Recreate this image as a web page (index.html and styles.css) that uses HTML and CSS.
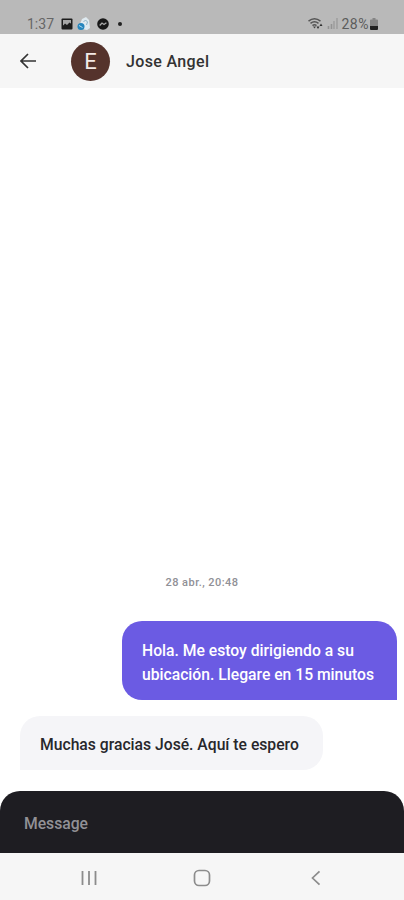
FILE: index.html
```html
<!DOCTYPE html>
<html lang="es">
 <head>
  <title>Jose Angel</title>
  <meta charset="UTF-8">
  <meta name="viewport" content="width=device-width, initial-scale=1">
  <link rel="stylesheet" href="styles.css">
 </head>
 <body>

 <div class="screen">
  <div class="status-bar">
   <span class="time">1:37</span>
   <svg class="picture" width="12" height="12" viewBox="0 0 12 12"><rect x="0.5" y="0.5" width="11" height="11" rx="1" fill="#1c1c1c"/><rect x="2" y="2" width="8" height="5.500" fill="#a6a6a6"/><path d="M1.500 8.500l2.500-3 2 1.500 2.500-2.500 2 1.500v4h-9z" fill="#1c1c1c"/></svg>
   <svg class="app" width="14" height="14" viewBox="0 0 14 14"><path d="M5 2l4-2 3 3 1 8-3 2-5-1-2-5z" fill="#dfeaf0"/><path d="M6.500 5l2-2 2 2-1 3" fill="none" stroke="#8db3c6"/><circle cx="4" cy="9.500" r="3.500" fill="#2585bd"/><path d="M2 8.500l3.500 2" stroke="#b7dcef"/></svg>
   <svg class="messenger" width="12" height="12" viewBox="0 0 12 12"><circle cx="6" cy="6" r="5.800" fill="#181818"/><path d="M2.700 7.500l2.300-2.500 2 1.500 2.400-1.800" fill="none" stroke="#aaa" stroke-width="1.300"/></svg>
   <span class="dot"></span>
   <svg class="wifi" width="16" height="13" viewBox="0 0 16 13"><path d="M.5 4.200q6-5 12 0M2.500 6.400q4-3.300 8 0M4.500 8.600q2-1.700 4 0" fill="none" stroke="#555" stroke-width="1.500"/><path d="M6.500 11.500l-1.500-2h3z" fill="#444"/><path d="M8.500 9.500h3l-1.500 2.500zM11.500 9h3L13 6.500z" fill="#303030"/></svg>
   <svg class="signal" width="11" height="11" viewBox="0 0 11 11"><path d="M1.500 11V8M4.500 11V6" stroke="#939393" stroke-width="1.600"/><path d="M7 11V3M10 11V0" stroke="#a0a0a0" stroke-width="1.600"/></svg>
   <span class="percent">28%</span>
   <svg class="battery" width="8" height="12" viewBox="0 0 8 12"><path d="M2.500 0h3v1.500H7q1 0 1 1V8H0V2.500q0-1 1-1h1.500z" fill="#858585"/><path d="M0 8h8v3q0 1-1 1H1q-1 0-1-1z" fill="#222"/></svg>
  </div>

  <div class="header">
   <svg class="back" width="16" height="16" viewBox="0 0 16 16"><path d="M8 1L1 8l7 7M1 8h15" fill="none" stroke="#333" stroke-width="1.700"/></svg>
   <div class="avatar">E</div>
   <div class="name">Jose Angel</div>
  </div>

  <div class="chat">
   <div class="date">28 abr., 20:48</div>
   <div class="message sent">Hola. Me estoy dirigiendo a su<br>ubicación. Llegare en 15 minutos</div>
   <div class="message received">Muchas gracias José. Aquí te espero</div>
  </div>

  <div class="composer">Message</div>

  <div class="nav">
   <svg width="18" height="18" viewBox="0 0 18 18"><path d="M2.500 2v14M9 2v14M15.500 2v14" stroke="#8c8c8c" stroke-width="1.800"/></svg>
   <svg width="18" height="18" viewBox="0 0 18 18"><rect x="1.500" y="1.500" width="15" height="15" rx="4.500" fill="none" stroke="#8c8c8c" stroke-width="1.700"/></svg>
   <svg width="18" height="18" viewBox="0 0 18 18"><path d="M13.500 2.300L6.500 9l7 6.700" fill="none" stroke="#8c8c8c" stroke-width="1.700"/></svg>
  </div>
 </div>

 </body>
</html>
```
FILE: styles.css
```css
* { box-sizing: border-box; }
body { margin: 0; background: #fff; font-family: Roboto, "Liberation Sans", sans-serif; }
svg { display: block; flex: none; }
.screen { display: flex; flex-direction: column; height: 900px; overflow: hidden; }

.status-bar { display: flex; align-items: center; height: 34px; padding: 13px 26px 0 27px; background: #b9b9b9; font-size: 14px; line-height: 20px; color: #666; }
.time { width: 28px; }
.picture { margin-left: 6px; }
.app { margin-left: 4px; }
.messenger { margin-left: 6px; }
.dot { width: 4px; height: 4px; margin-left: 9px; border-radius: 50%; background: #222; }
.wifi { margin-left: auto; }
.signal { margin-left: 3px; }
.percent { margin-left: 4px; letter-spacing: .5px; color: #5c5c5c; }
.battery { margin-left: 1px; }

.header { display: flex; align-items: center; height: 54px; padding: 0 20px; background: #f6f6f6; }
.avatar { width: 39px; height: 39px; margin-left: 35px; border-radius: 50%; background: #55332c; color: #f3e9e6; font-size: 22px; line-height: 40px; text-align: center; }
.name { margin-left: 16px; font-size: 16px; font-weight: 500; letter-spacing: .35px; color: #333; }

.chat { flex: 1; display: flex; flex-direction: column; justify-content: flex-end; padding: 0 7px 21px 20px; }
.date { margin-bottom: 31px; padding-right: 13px; font-size: 11px; line-height: 14px; font-weight: 500; letter-spacing: .45px; text-align: center; color: #909096; }
.message { font-size: 15.7px; line-height: 24px; font-weight: 500; white-space: nowrap; }
.sent { align-self: flex-end; width: 275px; height: 79px; padding: 18px 20px 0; border-radius: 20px 20px 0 20px; background: #6b5be3; color: #fff; }
.received { align-self: flex-start; width: 303px; height: 54px; margin-top: 16px; padding: 17px 20px 0; border-radius: 20px 20px 20px 0; background: #f5f5f8; color: #27272b; }

.composer { height: 62px; padding: 21px 24px 0; border-radius: 20px 20px 0 0; background: #1e1d22; color: #929196; font-size: 15.7px; line-height: 24px; font-weight: 500; }
.nav { display: flex; justify-content: space-between; align-items: center; height: 47px; padding: 2px 80px 0 80px; background: #f6f6f6; }
```
